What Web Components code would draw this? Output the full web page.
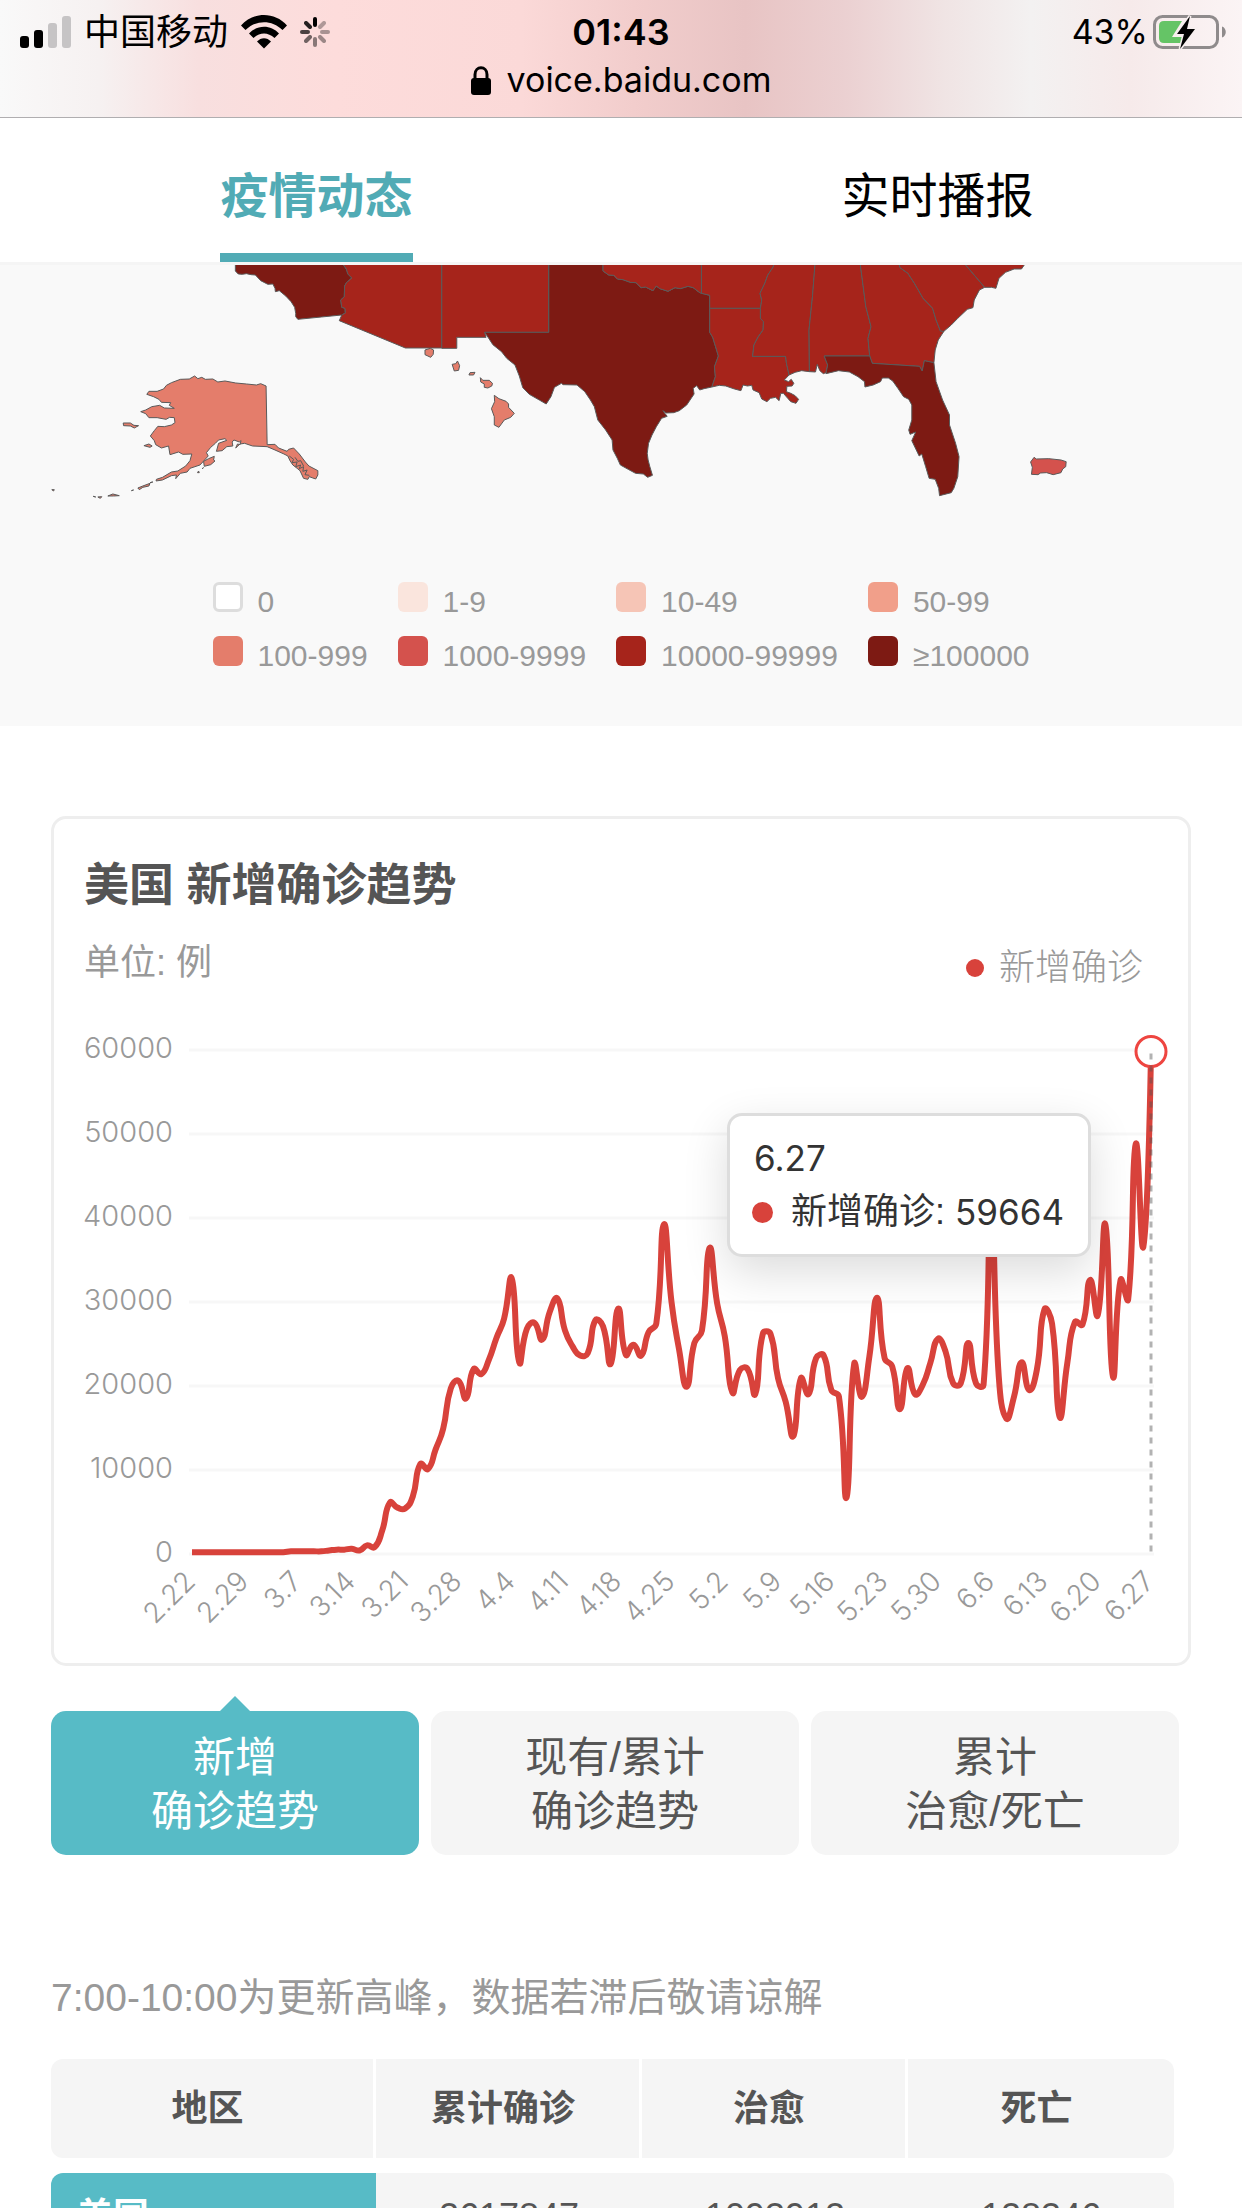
<!DOCTYPE html>
<html lang="zh-CN">
<head>
<meta charset="UTF-8">
<meta name="viewport" content="width=device-width, initial-scale=1">
<title>疫情动态</title>
<style>
  body {
    margin: 0;
    background: #fff;
    color: #555;
    font-family: "Liberation Sans", "Noto Sans CJK SC", sans-serif;
    --teal: #57bbc6;
    --grey: #f5f5f5;
    --red: #d8423b;
    --ui-font: Inter, "Noto Sans CJK SC", sans-serif;
  }
</style>
</head>
<body>
<epidemic-app></epidemic-app>

<script>
/* 公共基类：把模板放进 shadow root */
class BaseElement extends HTMLElement {
  constructor() {
    super();
    this.attachShadow({ mode: 'open' });
    const template = document.createElement('template');
    template.innerHTML = this.render();
    this.shadowRoot.appendChild(template.content.cloneNode(true));
  }

  render() {
    return '<slot></slot>';
  }
}

/* 顶部状态栏：信号、时间、电量、网址 */
class StatusBar extends BaseElement {
  render() {
    return `
<style>
  :host {
    display: block;
    flex: none;
    padding: 10px 15px 13px;
    border-bottom: 1px solid #b0aeb0;
    color: #000;
    font-family: var(--ui-font);
    background: linear-gradient(90deg, #f9f9f9 0%, #f6f1f1 8%, #f8dfdf 16%, #fddcdb 27%, #fbd9d8 42%,
      #f2cdcc 51%, #e8c4c4 60%, #ebd0d1 68%, #f0e4e4 76%, #f3f1f1 83%, #f6eaea 91%, #fbf4f5 100%);
  }
  svg { display: block; flex: none; }
  .row { display: grid; grid-template-columns: 1fr auto 1fr; align-items: center; height: 42px; font-size: 34px; line-height: 42px; }
  .left, .right, .url { display: flex; align-items: center; }
  .left { gap: 13px; padding-left: 5px; }
  .carrier { font-size: 36px; line-height: 44px; }
  .right { justify-content: flex-end; gap: 5px; }
  time { font-size: 36px; font-weight: 600; }
  .url { justify-content: center; gap: 16px; height: 48px; margin-top: 4px; line-height: 48px; font-size: 34px; }
</style>
<div class="row">
  <div class="left">
    <svg width="51" height="32" viewBox="0 0 51 32">
      <rect y="20" width="9" height="12" rx="3"/>
      <rect x="14" y="14" width="9" height="18" rx="3"/>
      <rect x="28" y="7" width="9" height="25" rx="3" fill="#c6c4c5"/>
      <rect x="42" width="9" height="32" rx="3" fill="#c6c4c5"/>
    </svg>
    <span class="carrier">中国移动</span>
    <svg width="46" height="34" viewBox="0 0 46 34">
      <path d="M0 10.500C12-3.500 34-3.500 46 10.500L41.500 15C31 4.500 15 4.500 4.500 15Z"/>
      <path d="M8 18.500C16 9.500 30 9.500 38 18.500L33.500 23C27 17 19 17 12.500 23Z"/>
      <path d="M16 26.500C20 22 26 22 30 26.500L23 33.500Z"/>
    </svg>
    <svg width="30" height="30" viewBox="-15 -15 30 30" stroke="#000" stroke-width="4" stroke-linecap="round">
      <path d="M0-7V-13"/>
      <path d="M5-5L9-9" opacity=".3"/>
      <path d="M7 0H13" opacity=".33"/>
      <path d="M5 5L9 9" opacity=".38"/>
      <path d="M0 7V13" opacity=".45"/>
      <path d="M-5 5L-9 9" opacity=".55"/>
      <path d="M-7 0H-13" opacity=".7"/>
      <path d="M-5-5L-9-9" opacity=".85"/>
    </svg>
  </div>
  <time>01:43</time>
  <div class="right">
    <span>43%</span>
    <svg width="74" height="36" viewBox="0 0 74 36">
      <rect x="1.500" y="2.500" width="63" height="31" rx="8" fill="none" stroke="#8f8b8c" stroke-width="3"/>
      <path d="M69 12.500C74 14 74 22 69 23.500Z" fill="#8f8b8c"/>
      <path d="M11 7H29L19 23H29L28 29H11Q6 29 6 24V12Q6 7 11 7Z" fill="#65c466"/>
      <path d="M37 2L24 20H31L27 35L42 15H34Z" stroke="#f6eeee" stroke-width="3"/>
      <path d="M37 2L24 20H31L27 35L42 15H34Z"/>
    </svg>
  </div>
</div>
<div class="url">
  <svg width="20" height="29" viewBox="0 0 20 29">
    <rect y="12" width="20" height="17" rx="3"/>
    <path d="M4 13V8.500C4 -.5 16-.5 16 8.500V13" fill="none" stroke="#000" stroke-width="3"/>
  </svg>
  <span>voice.baidu.com</span>
</div>`;
  }
}

/* 页面标签：疫情动态 / 实时播报 */
class PageTabs extends BaseElement {
  render() {
    return `
<style>
  :host { display: block; flex: none; border-bottom: 3px solid #f5f5f5; background: #fff; }
  nav { display: grid; grid-template-columns: 1fr 1fr; }
  div { display: flex; justify-content: center; padding-left: 12px; }
  a { display: block; padding: 49px 0 26px; border-bottom: 9px solid transparent; color: #000; font-size: 48px; line-height: 60px; text-decoration: none; }
  a[aria-current] { border-color: #51abb5; color: #51abb5; font-weight: 700; }
</style>
<nav>
  <div><a href="#trend" aria-current="page">疫情动态</a></div>
  <div><a href="#news">实时播报</a></div>
</nav>`;
  }
}

/* 美国各州确诊分布 */
class StateMap extends BaseElement {
  render() {
    const legend = [
      ['#fff', '0'], ['#fae5dd', '1-9'], ['#f6c5b6', '10-49'], ['#f19f8a', '50-99'],
      ['#e47d6b', '100-999'], ['#d4524d', '1000-9999'], ['#a6241b', '10000-99999'], ['#7d1a13', '≥100000']
    ];
    return `
<style>
  :host { display: block; padding-bottom: 54px; background: #f9f9f9; }
  svg { display: block; width: 100%; }
  path { stroke: #5a5a5a; stroke-width: 1; stroke-linejoin: round; vector-effect: non-scaling-stroke; }
  .high { fill: #7d1a13; }
  .mid { fill: #a6241b; }
  .low { fill: #d4524d; }
  .faint { fill: #e47d6b; }
  ul { display: grid; grid-template-columns: repeat(4, auto); grid-auto-rows: 36px; justify-content: center; gap: 18px 30px; margin: 17px 0 0; padding: 0; list-style: none; }
  li { display: flex; align-items: baseline; gap: 15px; color: #999; font-size: 30px; line-height: 30px; }
  i { box-sizing: border-box; width: 30px; height: 30px; border-radius: 6px; }
  li:first-child i { border: 3px solid #ddd; }
</style>
<svg viewBox="0 0 1242 300" role="img" aria-label="美国疫情地图">
  <!-- 西部、阿拉斯加、夏威夷 -->
  <g transform="translate(0 -15) scale(.35714 .33333)">
    <path class="high" d="M659 40V63L667 72 678 73 690 71 703 74 715 75 730 92 750 103 764 102 770 115 771 125 782 122 800 138 815 155 825 172 828 190V200L834 208 900 201 957 195 967 189 966 175 957 172 954 150 964 140 965 108 970 98 985 84 974 72 970 58 962 45 961 40Z"/>
    <path class="mid" d="M961 40L962 45 970 58 974 72 985 84 970 98 965 108 964 140 954 150 957 172 966 175 967 189 957 195 950 212 1135 294H1237V40Z"/>
    <path class="mid" d="M1237 40H1536V247H1357L1361 262H1279V295H1237Z"/>
    <path class="faint" d="M1190 300L1205 295 1214 300 1213 313 1206 322 1190 314ZM1266 343L1276 341 1281 333 1287 347 1284 361 1272 363ZM1316 368L1330 367 1326 375 1313 375ZM1345 383L1352 391 1370 391 1379 400 1377 408 1366 414 1356 412V402L1346 396ZM1384 436L1397 446 1417 454 1424 462V472L1440 490 1430 502 1412 510 1397 532 1384 525V500L1376 476 1385 455Z"/>
    <path class="faint" d="M745 408L730 401 718 405 690 402 660 399 630 393 610 396 596 387 575 388 565 382 554 386 545 378 530 387 505 388 480 398 466 406 458 417 440 424 417 424 411 433 430 440 445 448 452 457 478 458 474 466 488 475 460 474 447 466 425 470 408 480 394 485 408 491 417 503 440 503 465 508 475 502 488 503 490 518 480 525 460 530 442 529 432 542 421 558 432 572 436 584 452 594 472 588 476 614 500 606 512 613 537 612 532 632 520 648 498 663 480 666 455 682 438 688 437 693 455 690 480 677 494 675 492 686 505 670 524 666 532 655 560 645 583 618 578 608 590 592 603 580 612 570 630 566 635 571 612 580 606 604 622 602 635 590 652 588 650 576 655 570 670 576 675 572 672 584 665 582 660 594 672 582 685 580 707 588 748 590 770 600 795 612 806 618 812 632 820 645 832 655 840 662 850 685 862 688 866 680 876 684 884 687 890 675V662L865 648 855 636 838 612 822 594 808 598 804 604 780 594 770 583 748 584Z"/>
    <path class="faint" d="M345 519L365 519 375 526 388 527 376 534 365 528 346 527ZM403 587L417 582 426 588 420 592ZM570 634L584 626 600 619 598 630 602 633 590 644 572 649ZM553 668L556 663 558 668ZM386 714L400 708 420 700 417 708 400 712 390 719ZM145 719L152 719 150 723ZM261 739L268 741ZM274 741L285 740 281 745ZM302 738L316 732 334 737 318 738ZM368 722L374 720ZM420 698L428 696ZM566 656L570 653Z"/>
    <path d="M810 618L822 628 818 638 832 636 828 650 842 645 838 656 850 650 848 664 860 660 854 674 866 676M826 622L834 634 842 632 850 648" fill="none"/>
  </g>
  <!-- 南部各州、波多黎各 -->
  <g transform="translate(420 -15) scale(.43367 .33333)">
    <path class="high" d="M297 40H422V63L435 75 447 76 455 87 468 89 485 97 498 98 510 113 520 111 537 122 545 108 553 116 572 124 588 113 600 116 618 109 630 113 645 128 668 136V247L675 262 688 318 679 350 681 380 673 411 655 416 645 420 638 407 630 415 632 432 615 465 598 482 585 488 568 489 560 482 570 499 557 505 545 530 535 555 527 580 524 610 526 630 530 650 536 676 525 682 515 672 497 670 480 658 462 645 455 625 445 600 443 570 428 540 410 510 402 470 393 450 380 425 362 405 330 404 326 400 310 412 302 440 291 462 275 450 252 433 237 413 229 378 219 345 200 325 188 305 168 284 158 264 149 247H297Z"/>
    <path class="mid" d="M422 40H649V130L645 128 630 113 618 109 600 116 588 113 572 124 553 116 545 108 537 122 520 111 510 113 498 98 485 97 468 89 455 87 447 76 435 75 422 63Z"/>
    <path class="mid" d="M649 40H817L814 52 802 75 795 100 784 130 788 150 785 175H668V136L649 130Z"/>
    <path class="mid" d="M668 175H785V205L792 215 791 240 780 260 770 285 767 319H843L845 340 851 375 840 390 850 395 856 388 862 400 858 408 846 409 845 425 855 430 865 437 873 448 867 460 855 455 848 445 838 430 832 430 828 452 820 442 808 445 800 455 788 447 782 428 768 420 765 406 755 408 745 405 740 422 725 417 705 408 690 406 673 411 681 380 679 350 688 318 675 262 668 247Z"/>
    <path class="mid" d="M817 40H911L905 140 897 240 898 365 880 362 865 367 851 375 845 340 843 319H767L770 285 780 260 791 240 792 215 785 205V175L788 150 784 130 795 100 802 75 814 52Z"/>
    <path class="mid" d="M911 40H1015L1028 170 1040 230 1033 265 1037 318H932L940 345 936 368 930 371 922 362 916 343 912 366 898 365 897 240 905 140Z"/>
    <path class="mid" d="M1015 40H1104L1107 53 1125 70 1140 100 1160 145 1182 175 1190 210 1200 243 1208 244 1195 270 1188 300 1185 338 1163 332 1158 363 1152 349 1043 340 1037 318 1033 265 1040 230 1028 170Z"/>
    <path class="mid" d="M1104 40H1255L1302 112 1290 120 1278 150 1275 173 1262 178 1240 205 1225 225 1208 244 1200 243 1190 210 1182 175 1160 145 1140 100 1125 70 1107 53Z"/>
    <path class="mid" d="M1255 40H1396L1387 57 1370 57 1350 67 1335 85 1328 115 1318 112H1302Z"/>
    <path class="high" d="M932 318H1037L1043 340 1152 349 1158 363 1163 332 1185 338 1190 395 1205 450 1221 495V525L1235 580 1243 620 1240 680 1231 715 1225 728 1198 737 1196 715 1188 688 1174 685 1166 650 1157 612 1151 618 1134 572 1143 546 1130 553 1127 540 1134 510V465L1127 448 1115 440 1102 415 1090 393 1080 384H1066L1062 395 1045 405 1026 411 1025 395 1010 380 990 366 965 362 936 371 940 345Z"/>
    <path class="low" d="M1416 622L1421 627 1450 626 1478 630 1490 635 1489 650 1482 657 1478 668 1460 674 1445 668 1431 669 1425 674 1410 673 1412 652 1408 636Z"/>
  </g>
</svg>
<ul>
  ${legend.map(([color, text]) => `<li><i style="background:${color}"></i>${text}</li>`).join('')}
</ul>`;
  }
}

/* 每日新增确诊，单位：百例，2.22 起每天一个点 */
const DAILY = [
  1, 1, 1, 1, 1, 1, 1, 1, 1, 1, 1, 1, 1, 2, 2, 2, 2, 2, 3, 4, 4, 5, 3, 9, 7, 27, 60, 54,
  53, 67, 106, 100, 123, 148, 196, 205, 184, 219, 213, 230, 256, 279, 327, 227, 267, 274, 254, 287,
  303, 265, 246, 235, 238, 277, 270, 225, 291, 236, 248, 235, 263, 273, 391, 299, 242, 198, 250, 265,
  363, 297, 258, 191, 218, 219, 189, 261, 261, 208, 180, 139, 208, 189, 232, 235, 194, 186, 66, 225,
  186, 234, 304, 232, 222, 171, 220, 189, 200, 226, 255, 240, 202, 202, 250, 202, 200, 420, 210, 160,
  186, 227, 194, 218, 290, 273, 162, 226, 275, 272, 325, 283, 391, 210, 325, 302, 487, 365, 597
];
const DATES = ['2.22', '2.29', '3.7', '3.14', '3.21', '3.28', '4.4', '4.11', '4.18', '4.25',
  '5.2', '5.9', '5.16', '5.23', '5.30', '6.6', '6.13', '6.20', '6.27'];

/* 折线图卡片 */
class TrendChart extends BaseElement {
  render() {
    const left = 138, right = 1097, zero = 533, step = 84;
    const points = DAILY.map((v, i) => [left + (right - left) * i / (DAILY.length - 1), zero - v * step / 100]);
    const [endX, endY] = points[points.length - 1];

    const ticks = [0, 1, 2, 3, 4, 5, 6].map((n) => {
      const y = 534 - n * step;
      return `<path class="grid" d="M135 ${y}H1100"/><text class="value" x="119" y="${y + 8}">${n * 10000}</text>`;
    }).join('');

    const dates = DATES.map((text, i) => {
      const x = left + (right - left) * i / (DATES.length - 1) + 5;
      return `<text transform="translate(${x} 563) rotate(-45)">${text}</text>`;
    }).join('');

    return `
<style>
  :host { display: block; border: 3px solid #eee; border-radius: 15px; padding-top: 37px; }
  h2 { margin: 0 30px 23px; font-size: 45px; line-height: 60px; }
  .meta { display: flex; justify-content: space-between; align-items: flex-start; padding: 0 45px 0 30px; color: #999; font-size: 36px; }
  .unit { line-height: 48px; }
  .legend { display: flex; align-items: center; gap: 15px; font-weight: 300; line-height: 57px; }
  .legend i { width: 18px; height: 18px; border-radius: 50%; background: var(--red); }
  .plot { position: relative; margin-top: 24px; }
  svg { display: block; width: 100%; }
  text { fill: #999; font: 300 28px/1 var(--ui-font); text-anchor: end; }
  .value { font-size: 29px; }
  .grid { stroke: #f7f7f7; stroke-width: 3; }
  .line { fill: none; stroke: var(--red); stroke-width: 6; stroke-linejoin: round; }
  .tip { position: absolute; top: 93px; right: 97px; padding: 15px 24px; border: 3px solid #ddd; border-radius: 15px; background: #fff; box-shadow: 0 15px 45px rgba(0, 0, 0, .14); color: #333; font-size: 36px; line-height: 54px; white-space: nowrap; }
  .tip p { display: flex; align-items: center; margin: 0; }
  .tip i { width: 21px; height: 21px; margin: 0 18px 0 -2px; border-radius: 50%; background: var(--red); }
  .tip .num { font: 35px/54px var(--ui-font); }
  .name { margin-right: 10px; }
</style>
<h2>美国 新增确诊趋势</h2>
<div class="meta">
  <span class="unit">单位: 例</span>
  <span class="legend"><i></i>新增确诊</span>
</div>
<div class="plot">
  <svg viewBox="0 0 1134 643">
    ${ticks}
    ${dates}
    <path class="line" d="${this.curve(points)}"/>
    <circle cx="${endX}" cy="${endY}" r="15" fill="#fff" stroke="#ee4540" stroke-width="3"/>
    <path d="M${endX} ${endY + 2}V${zero}" stroke="#555" stroke-opacity=".45" stroke-width="3" stroke-dasharray="6 6"/>
  </svg>
  <div class="tip">
    <p class="num">6.27</p>
    <p><i></i><span class="name">新增确诊:</span><span class="num">59664</span></p>
  </div>
</div>`;
  }

  // 平滑曲线：控制点沿前后两点的连线方向，按线段长度分配
  curve(points) {
    const smooth = 0.5;
    let d = `M${points[0]}`;
    let [cx, cy] = points[0];
    for (let i = 1; i < points.length; i++) {
      const prev = points[i - 1];
      const p = points[i];
      const next = points[i + 1] || p;
      const lenPrev = Math.hypot(p[0] - prev[0], p[1] - prev[1]);
      const lenNext = Math.hypot(next[0] - p[0], next[1] - p[1]);
      const ratio = lenNext / (lenPrev + lenNext);
      const vx = (next[0] - prev[0]) * smooth;
      const vy = (next[1] - prev[1]) * smooth;
      const end = i === points.length - 1 ? p : [p[0] - vx * (1 - ratio), p[1] - vy * (1 - ratio)];
      d += `C${cx} ${cy} ${end} ${p}`;
      cx = p[0] + vx * ratio;
      cy = p[1] + vy * ratio;
    }
    return d;
  }
}

/* 图表切换按钮 */
class TrendSwitch extends BaseElement {
  render() {
    return `
<style>
  :host { display: grid; grid-template-columns: repeat(3, 1fr); gap: 12px; margin: 45px 12px 0 0; }
  button { position: relative; padding: 20px 0 16px; border: 0; border-radius: 15px; background: var(--grey); color: #555; font: 42px/54px "Liberation Sans", "Noto Sans CJK SC", sans-serif; }
  button[aria-pressed="true"] { background: var(--teal); color: #fff; }
  button[aria-pressed="true"]::before { content: ""; position: absolute; left: 50%; bottom: 100%; margin-left: -15px; border: 15px solid transparent; border-top: 0; border-bottom-color: var(--teal); }
</style>
<button type="button" aria-pressed="true">新增<br>确诊趋势</button>
<button type="button" aria-pressed="false">现有/累计<br>确诊趋势</button>
<button type="button" aria-pressed="false">累计<br>治愈/死亡</button>`;
  }

  connectedCallback() {
    const buttons = this.shadowRoot.querySelectorAll('button');
    buttons.forEach((button) => {
      button.addEventListener('click', () => {
        buttons.forEach((b) => b.setAttribute('aria-pressed', b === button));
      });
    });
  }
}

/* 地区数据表 */
class RegionTable extends BaseElement {
  render() {
    return `
<style>
  :host { display: block; margin: 113px 17px 0 0; }
  p { margin: 0 0 31px; color: #999; font-size: 39px; line-height: 60px; }
  table { width: 100%; table-layout: fixed; border-spacing: 0; font-size: 36px; line-height: 45px; text-align: center; }
  th, td { box-sizing: border-box; padding: 0; background: var(--grey); }
  thead th { height: 99px; padding-right: 9px; }
  thead th:not(:last-child) { border-right: 3px solid #fff; }
  th:first-child { width: 325px; border-radius: 12px 0 0 12px; }
  th:last-child, td:last-child { border-radius: 0 12px 12px 0; }
  tbody::before { content: ""; display: block; height: 15px; }
  tbody th, tbody td { height: 87px; }
  tbody th { padding-left: 26px; background: var(--teal); color: #fff; text-align: left; }
</style>
<p>7:00-10:00为更新高峰，数据若滞后敬请谅解</p>
<table>
  <thead><tr><th>地区</th><th>累计确诊</th><th>治愈</th><th>死亡</th></tr></thead>
  <tbody><tr><th>美国</th><td>2617847</td><td>1093912</td><td>128346</td></tr></tbody>
</table>`;
  }
}

/* 整个屏幕 */
class EpidemicApp extends BaseElement {
  render() {
    return `
<style>
  :host { display: flex; flex-direction: column; height: 100vh; overflow: hidden; }
  main { flex: 1; min-height: 0; overflow: hidden; }
  section { padding: 90px 51px 0; }
</style>
<status-bar></status-bar>
<page-tabs></page-tabs>
<main>
  <state-map></state-map>
  <section id="trend">
    <trend-chart></trend-chart>
    <trend-switch></trend-switch>
    <region-table></region-table>
  </section>
</main>`;
  }
}

customElements.define('status-bar', StatusBar);
customElements.define('page-tabs', PageTabs);
customElements.define('state-map', StateMap);
customElements.define('trend-chart', TrendChart);
customElements.define('trend-switch', TrendSwitch);
customElements.define('region-table', RegionTable);
customElements.define('epidemic-app', EpidemicApp);
</script>
</body>
</html>
